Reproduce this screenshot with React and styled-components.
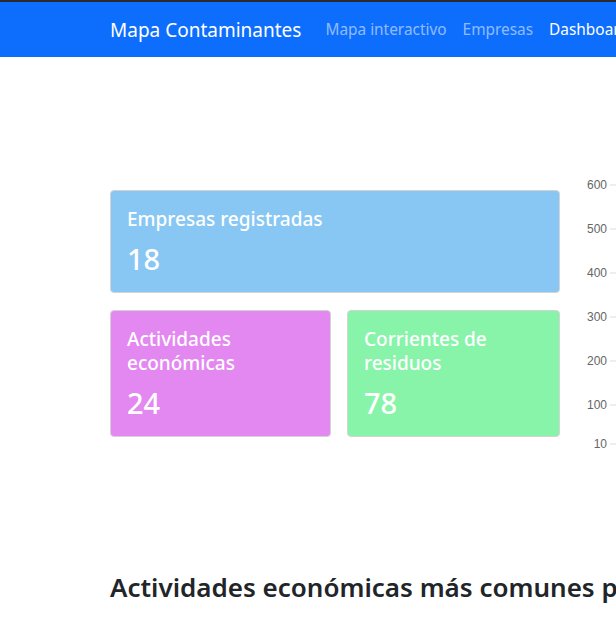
import React from 'react';
import styled, { createGlobalStyle } from 'styled-components';

const GlobalStyle = createGlobalStyle`
    html, body {
        margin: 0;
        padding: 0;
        background: #ffffff;
        overflow: hidden;
    }
    body {
        font-family: "Noto Sans", "Open Sans", sans-serif;
        color: #212529;
    }
`;

const stats = [
    { title: 'Empresas registradas', value: 18, color: '#88c7f4', wide: true },
    { title: 'Actividades económicas', value: 24, color: '#e488f1' },
    { title: 'Corrientes de residuos', value: 78, color: '#88f4aa' },
];

const ticks = ['600', '500', '400', '300', '200', '100', '10'];

const App = () => {
    return (
        <PAGE>
            <GlobalStyle />
            <NAVBAR>
                <BRAND>Mapa Contaminantes</BRAND>
                <NAVLINK>Mapa interactivo</NAVLINK>
                <NAVLINK>Empresas</NAVLINK>
                <NAVLINK active>Dashboard</NAVLINK>
            </NAVBAR>
            <MAIN>
                <ROW>
                    <CARDS>
                        {stats.map((s) => (
                            <CARD key={s.title} color={s.color} wide={s.wide}>
                                <CARDTITLE>{s.title}</CARDTITLE>
                                <CARDVALUE>{s.value}</CARDVALUE>
                            </CARD>
                        ))}
                    </CARDS>
                    <CHART>
                        <svg width="60" height="290" viewBox="0 0 60 290">
                            {ticks.map((t, i) => {
                                const y = 15 + i * 44 - (i === 6 ? 5 : 0);
                                return (
                                    <g key={t}>
                                        <text
                                            x="37"
                                            y={y + 4}
                                            textAnchor="end"
                                            fontSize="12"
                                            fontFamily="Liberation Sans, Arial, sans-serif"
                                            fill="#666666"
                                        >
                                            {t}
                                        </text>
                                        <line x1="40" x2="50" y1={y} y2={y} stroke="#dddddd" strokeWidth="1" />
                                    </g>
                                );
                            })}
                        </svg>
                    </CHART>
                </ROW>
                <HEADING>Actividades económicas más comunes por municipio</HEADING>
            </MAIN>
        </PAGE>
    );
};

const PAGE = styled.div`
    width: 616px;
    height: 621px;
    overflow: hidden;
`;

const NAVBAR = styled.nav`
    height: 55px;
    border-top: 2px solid #2b2b2b;
    background: #0d6efd;
    display: flex;
    align-items: center;
    padding-left: 110px;
    white-space: nowrap;
`;

const BRAND = styled.a`
    color: #ffffff;
    font-size: 19px;
    margin-right: 16px;
`;

const NAVLINK = styled.a`
    color: ${(p) => (p.active ? '#ffffff' : 'rgba(255,255,255,0.55)')};
    font-size: 15.4px;
    padding: 0 8px;
`;

const MAIN = styled.main`
    padding: 133px 0 0 110px;
`;

const ROW = styled.div`
    display: flex;
    gap: 10px;
`;

const CARDS = styled.div`
    flex: 0 0 450px;
    display: grid;
    grid-template-columns: 221px 1fr;
    column-gap: 16px;
    row-gap: 17px;
    align-content: start;
`;

const CARD = styled.div`
    grid-column: ${(p) => (p.wide ? 'span 2' : 'auto')};
    background: ${(p) => p.color};
    border: 1px solid #d4d4d4;
    border-radius: 4px;
    color: #ffffff;
    padding: 16px 16px 14px;
    height: ${(p) => (p.wide ? '103px' : '127px')};
    box-sizing: border-box;
`;

const CARDTITLE = styled.div`
    font-size: 19px;
    font-weight: 500;
    line-height: 24px;
`;

const CARDVALUE = styled.div`
    font-size: 29px;
    font-weight: 500;
    line-height: 40px;
    margin-top: 8px;
`;

const CHART = styled.div`
    flex: 0 0 auto;
    margin-top: -20px;
`;

const HEADING = styled.h2`
    margin: 104px 0 0;
    font-size: 26px;
    font-weight: 600;
    white-space: nowrap;
    color: #212529;
`;

export default App;
